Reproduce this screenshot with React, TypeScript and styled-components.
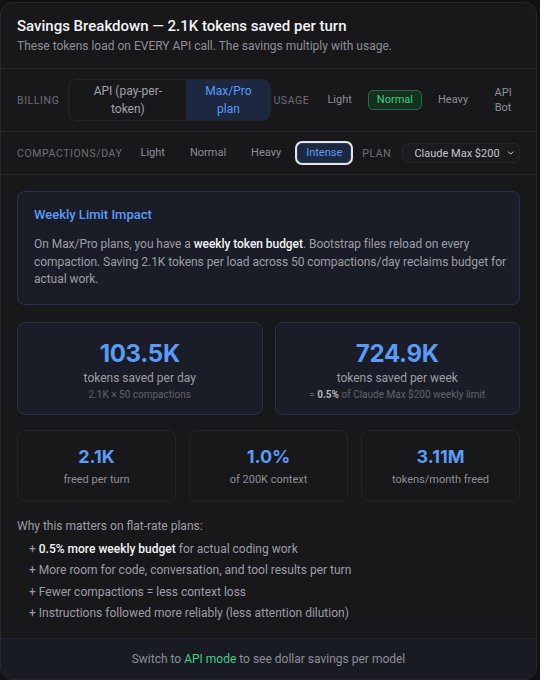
import * as React from 'react'
import styled, { createGlobalStyle } from 'styled-components'

const GlobalStyle = createGlobalStyle`
  html, body {
    margin: 0;
    padding: 0;
    background: #111113;
  }
  body {
    font-family: Roboto, 'Noto Sans', 'Liberation Sans', sans-serif;
    -webkit-font-smoothing: antialiased;
  }
  * { box-sizing: border-box; }
`

const Panel = styled.div`
  width: 537px;
  height: 678px;
  margin-top: 2px;
  background: #18181b;
  border: 1px solid #27272a;
  border-radius: 12px;
  overflow: hidden;
  display: flex;
  flex-direction: column;
`

const Header = styled.div`
  padding: 13px 16px 14px;
  border-bottom: 1px solid #27272a;
`

const Title = styled.h2`
  margin: 0;
  font-size: 15px;
  line-height: 20px;
  font-weight: 500;
  color: #f4f4f5;
`

const Subtitle = styled.p`
  margin: 2px 0 0;
  font-size: 12px;
  line-height: 16px;
  color: #8e8e96;
`

const ControlRow = styled.div<{ $h: number }>`
  height: ${p => p.$h}px;
  display: flex;
  align-items: center;
  padding: 0 16px;
  border-bottom: 1px solid #27272a;
`

const RowLabel = styled.span<{ $mr?: number; $ml?: number }>`
  font-size: 10.5px;
  letter-spacing: 0.6px;
  color: #6e6e76;
  text-transform: uppercase;
  margin-right: ${p => p.$mr ?? 11}px;
  margin-left: ${p => p.$ml ?? 0}px;
  flex-shrink: 0;
`

const Segmented = styled.div`
  display: flex;
  height: 42px;
  border: 1px solid #27272a;
  border-radius: 8px;
  overflow: hidden;
  flex-shrink: 0;
  margin-right: 2px;
`

const SegButton = styled.button<{ $active?: boolean; $w: number }>`
  width: ${p => p.$w}px;
  border: none;
  padding: 0 14px;
  font-family: inherit;
  font-size: 12px;
  line-height: 18px;
  background: ${p => (p.$active ? '#1c2740' : 'transparent')};
  color: ${p => (p.$active ? '#5b9bf8' : '#a1a1aa')};
  text-align: center;
`

const Chip = styled.button<{ $tone?: 'green' | 'blue' }>`
  flex-shrink: 0;
  font-family: inherit;
  font-size: 11px;
  line-height: 16px;
  padding: 1px 8px;
  border-radius: 5px;
  margin-right: 7px;
  border: 1px solid
    ${p => (p.$tone === 'green' ? '#236b48' : p.$tone === 'blue' ? '#2c3f66' : 'transparent')};
  background: ${p =>
    p.$tone === 'green' ? '#15301f' : p.$tone === 'blue' ? '#1c2740' : 'transparent'};
  color: ${p =>
    p.$tone === 'green' ? '#3fcf86' : p.$tone === 'blue' ? '#5b9bf8' : '#8e8e96'};
  box-shadow: ${p => (p.$tone === 'blue' ? '0 0 0 2px #e4e4e7' : 'none')};
`

const NarrowChip = styled(Chip)`
  width: 38px;
  padding: 0 5px;
  margin-right: 0;
  line-height: 15px;
  text-align: center;
`

const Select = styled.div`
  flex: 1;
  min-width: 0;
  height: 20px;
  display: flex;
  align-items: center;
  justify-content: space-between;
  gap: 6px;
  white-space: nowrap;
  padding: 0 4px 0 11px;
  border: 1px solid #27272a;
  border-radius: 6px;
  background: #1b1b1e;
  font-size: 11px;
  color: #c4c4ca;
`

const Content = styled.div`
  flex: 1;
  padding: 16px;
  display: flex;
  flex-direction: column;
`

const ImpactCard = styled.div`
  background: #1a1d27;
  border: 1px solid #283250;
  border-radius: 8px;
  padding: 14px 10px 15px 16px;
`

const ImpactTitle = styled.div`
  font-size: 13px;
  line-height: 18px;
  font-weight: 500;
  color: #5b9bf8;
`

const ImpactText = styled.p`
  margin: 12px 0 0;
  font-size: 12px;
  line-height: 17.5px;
  letter-spacing: -0.05px;
  color: #9d9da5;
  b { color: #f4f4f5; font-weight: 500; }
`

const StatGrid = styled.div<{ $cols: number; $mt: number }>`
  display: grid;
  grid-template-columns: repeat(${p => p.$cols}, 1fr);
  gap: ${p => (p.$cols === 2 ? 12 : 13)}px;
  margin-top: ${p => p.$mt}px;
`

const BigStat = styled.div`
  height: 93px;
  background: #1a1d27;
  border: 1px solid #26304c;
  border-radius: 8px;
  display: flex;
  flex-direction: column;
  align-items: center;
  padding-top: 16px;
`

const BigValue = styled.div`
  font-family: Inter, Roboto, sans-serif;
  font-size: 24px;
  line-height: 30px;
  font-weight: 700;
  color: #5b9bf8;
  letter-spacing: -0.3px;
`

const BigLabel = styled.div`
  font-size: 12px;
  line-height: 16px;
  color: #9d9da5;
  margin-top: 1px;
`

const BigSub = styled.div`
  font-size: 10px;
  line-height: 14px;
  color: #62626a;
  margin-top: 2px;
  b { color: #b4b4bb; font-weight: 700; }
`

const SmallStat = styled.div`
  height: 72px;
  border: 1px solid #242428;
  border-radius: 8px;
  display: flex;
  flex-direction: column;
  align-items: center;
  padding-top: 14px;
`

const SmallValue = styled.div`
  font-family: Inter, Roboto, sans-serif;
  font-size: 18px;
  line-height: 24px;
  font-weight: 700;
  color: #5b9bf8;
`

const SmallLabel = styled.div`
  font-size: 11px;
  line-height: 16px;
  color: #8e8e96;
  margin-top: 3px;
`

const WhyTitle = styled.div`
  margin-top: 16px;
  font-size: 12px;
  line-height: 16px;
  color: #9d9da5;
`

const List = styled.ul`
  list-style: none;
  margin: 7px 0 0;
  padding: 0 0 0 12px;
  display: flex;
  flex-direction: column;
  gap: 5.5px;
`

const Item = styled.li`
  font-size: 12px;
  line-height: 16px;
  color: #9d9da5;
  &::before { content: '+ '; }
  b { color: #f4f4f5; font-weight: 500; }
`

const Footer = styled.div`
  height: 41px;
  border-top: 1px solid #26272e;
  background: #191b23;
  display: flex;
  align-items: center;
  justify-content: center;
  font-size: 12px;
  color: #8e8e96;
  span { color: #3fcf86; }
`

const Chevron = () => (
  <svg width="14" height="14" viewBox="0 0 24 24" fill="none" stroke="#d4d4d8" strokeWidth="2.5" strokeLinecap="round" strokeLinejoin="round">
    <path d="m6 9 6 6 6-6" />
  </svg>
)

export default function App() {
  return (
    <>
      <GlobalStyle />
      <Panel>
        <Header>
          <Title>Savings Breakdown — 2.1K tokens saved per turn</Title>
          <Subtitle>These tokens load on EVERY API call. The savings multiply with usage.</Subtitle>
        </Header>

        <ControlRow $h={63}>
          <RowLabel $mr={9}>Billing</RowLabel>
          <Segmented>
            <SegButton $w={117}>API (pay-per-token)</SegButton>
            <SegButton $w={84} $active>Max/Pro plan</SegButton>
          </Segmented>
          <RowLabel $mr={9}>Usage</RowLabel>
          <Chip>Light</Chip>
          <Chip $tone="green">Normal</Chip>
          <Chip>Heavy</Chip>
          <NarrowChip>API Bot</NarrowChip>
        </ControlRow>

        <ControlRow $h={43}>
          <RowLabel $mr={9}>Compactions/day</RowLabel>
          <Chip>Light</Chip>
          <Chip>Normal</Chip>
          <Chip>Heavy</Chip>
          <Chip $tone="blue">Intense</Chip>
          <RowLabel $ml={4}>Plan</RowLabel>
          <Select>
            Claude Max $200
            <Chevron />
          </Select>
        </ControlRow>

        <Content>
          <ImpactCard>
            <ImpactTitle>Weekly Limit Impact</ImpactTitle>
            <ImpactText>
              On Max/Pro plans, you have a <b>weekly token budget</b>. Bootstrap files reload on every
              compaction. Saving 2.1K tokens per load across 50 compactions/day reclaims budget for
              actual work.
            </ImpactText>
          </ImpactCard>

          <StatGrid $cols={2} $mt={17}>
            <BigStat>
              <BigValue>103.5K</BigValue>
              <BigLabel>tokens saved per day</BigLabel>
              <BigSub>2.1K × 50 compactions</BigSub>
            </BigStat>
            <BigStat>
              <BigValue>724.9K</BigValue>
              <BigLabel>tokens saved per week</BigLabel>
              <BigSub>= <b>0.5%</b> of Claude Max $200 weekly limit</BigSub>
            </BigStat>
          </StatGrid>

          <StatGrid $cols={3} $mt={15}>
            <SmallStat>
              <SmallValue>2.1K</SmallValue>
              <SmallLabel>freed per turn</SmallLabel>
            </SmallStat>
            <SmallStat>
              <SmallValue>1.0%</SmallValue>
              <SmallLabel>of 200K context</SmallLabel>
            </SmallStat>
            <SmallStat>
              <SmallValue>3.11M</SmallValue>
              <SmallLabel>tokens/month freed</SmallLabel>
            </SmallStat>
          </StatGrid>

          <WhyTitle>Why this matters on flat-rate plans:</WhyTitle>
          <List>
            <Item><b>0.5% more weekly budget</b> for actual coding work</Item>
            <Item>More room for code, conversation, and tool results per turn</Item>
            <Item>Fewer compactions = less context loss</Item>
            <Item>Instructions followed more reliably (less attention dilution)</Item>
          </List>
        </Content>

        <Footer>
          Switch to&nbsp;<span>API mode</span>&nbsp;to see dollar savings per model
        </Footer>
      </Panel>
    </>
  )
}
